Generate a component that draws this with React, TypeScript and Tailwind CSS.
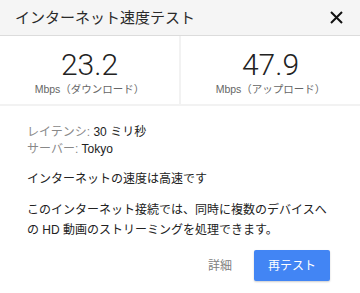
import { type FC } from 'react'

const font = "font-['Liberation_Sans','Noto_Sans_CJK_JP',sans-serif]"

type StatProps = {
  value: string
  label: string
  divider?: boolean
}

const Stat: FC<StatProps> = ({ value, label, divider }) => (
  <div
    className={
      divider
        ? 'flex w-[181px] flex-col items-center border-r-2 border-[#f2f2f2] pt-[14px]'
        : 'flex flex-1 flex-col items-center pt-[14px]'
    }
  >
    <span className="font-['Roboto',sans-serif] text-[30px] font-light leading-[30px] text-[#222]">
      {value}
    </span>
    <span className="mt-[2px] text-[10.5px] leading-[14px] text-[#666]">{label}</span>
  </div>
)

const App: FC = () => {
  return (
    <div className={`h-[293px] w-[360px] overflow-hidden bg-white ${font}`}>
      <div className="flex h-[36px] items-center justify-between border-b border-[#dcdcdc] bg-[#f5f5f5] pl-[15px] pr-[17px]">
        <h1 className="text-[15px] leading-none text-[#2a2a2a]">インターネット速度テスト</h1>
        <svg width="13" height="13" viewBox="0 0 13 13" className="mb-[1px]">
          <path d="M1 1L12 12M12 1L1 12" stroke="#111" strokeWidth="2" />
        </svg>
      </div>
      <div className="flex h-[70px] border-b-2 border-[#f2f2f2]">
        <Stat value="23.2" label="Mbps（ダウンロード）" divider />
        <Stat value="47.9" label="Mbps（アップロード）" />
      </div>
      <div className="px-[27px] pt-[18px] text-[12px] text-[#222]">
        <p className="leading-[17px]">
          <span className="text-[#888]">レイテンシ:</span> 30 ミリ秒
        </p>
        <p className="leading-[17px]">
          <span className="text-[#888]">サーバー:</span> Tokyo
        </p>
        <p className="mt-[13px] leading-[17px]">インターネットの速度は高速です</p>
        <p className="mt-[12px] leading-[20px]">
          このインターネット接続では、同時に複数のデバイスへの HD 動画のストリーミングを処理できます。
        </p>
      </div>
      <div className="mt-[10px] flex items-center justify-end gap-[22px] pr-[30px]">
        <button className="text-[12px] text-[#808080]">詳細</button>
        <button className="h-[31px] w-[76px] rounded-[2px] bg-[#4285f4] text-[12px] text-white shadow-[0_1px_2px_rgba(0,0,0,0.2)]">
          再テスト
        </button>
      </div>
    </div>
  )
}

export default App
